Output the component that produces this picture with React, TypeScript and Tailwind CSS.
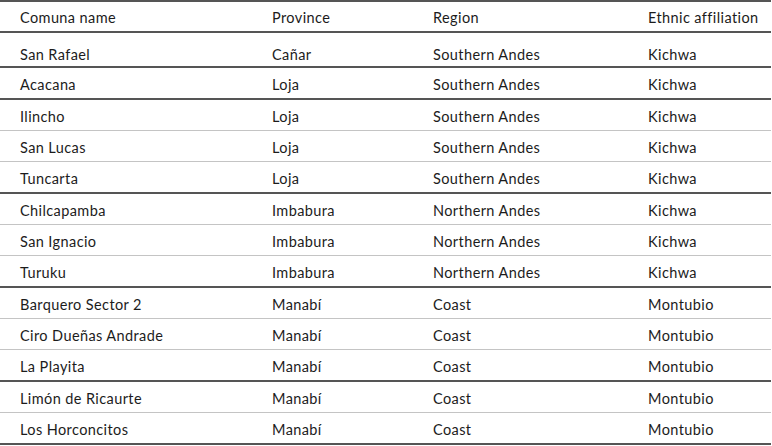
const rows: { name: string; province: string; region: string; ethnic: string; dark: boolean }[] = [
  { name: "San Rafael", province: "Cañar", region: "Southern Andes", ethnic: "Kichwa", dark: true },
  { name: "Acacana", province: "Loja", region: "Southern Andes", ethnic: "Kichwa", dark: true },
  { name: "Ilincho", province: "Loja", region: "Southern Andes", ethnic: "Kichwa", dark: false },
  { name: "San Lucas", province: "Loja", region: "Southern Andes", ethnic: "Kichwa", dark: false },
  { name: "Tuncarta", province: "Loja", region: "Southern Andes", ethnic: "Kichwa", dark: true },
  { name: "Chilcapamba", province: "Imbabura", region: "Northern Andes", ethnic: "Kichwa", dark: false },
  { name: "San Ignacio", province: "Imbabura", region: "Northern Andes", ethnic: "Kichwa", dark: false },
  { name: "Turuku", province: "Imbabura", region: "Northern Andes", ethnic: "Kichwa", dark: true },
  { name: "Barquero Sector 2", province: "Manabí", region: "Coast", ethnic: "Montubio", dark: false },
  { name: "Ciro Dueñas Andrade", province: "Manabí", region: "Coast", ethnic: "Montubio", dark: false },
  { name: "La Playita", province: "Manabí", region: "Coast", ethnic: "Montubio", dark: true },
  { name: "Limón de Ricaurte", province: "Manabí", region: "Coast", ethnic: "Montubio", dark: false },
  { name: "Los Horconcitos", province: "Manabí", region: "Coast", ethnic: "Montubio", dark: true },
];

export default function App() {
  return (
    <div className="w-[772px] h-[446px] bg-white overflow-hidden font-['Lato',sans-serif] text-[14.5px] tracking-[0.4px] text-[#1c1c1c]">
      <div className="w-[771px] border-t-2 border-[#555]">
        {/* header */}
        <div className="grid grid-cols-[272px_161px_215px_1fr] items-center h-[31px] pt-[2px] border-b-2 border-[#555]">
          <div className="pl-[20px]">Comuna name</div>
          <div>Province</div>
          <div>Region</div>
          <div className="whitespace-nowrap">Ethnic affiliation</div>
        </div>
        {rows.map((r, i) => (
          <div
            key={r.name}
            className={
              "grid grid-cols-[272px_161px_215px_1fr] items-center " +
              (r.dark ? "border-b-2 border-[#555] " : "border-b border-[#c4c4c4] ") +
              (i === 0 ? "h-[35px] pt-[10px]" : r.dark ? "h-[32px] pt-[4px]" : "h-[31px] pt-[4px]")
            }
          >
            <div className="pl-[20px]">{r.name}</div>
            <div>{r.province}</div>
            <div>{r.region}</div>
            <div>{r.ethnic}</div>
          </div>
        ))}
      </div>
    </div>
  );
}
